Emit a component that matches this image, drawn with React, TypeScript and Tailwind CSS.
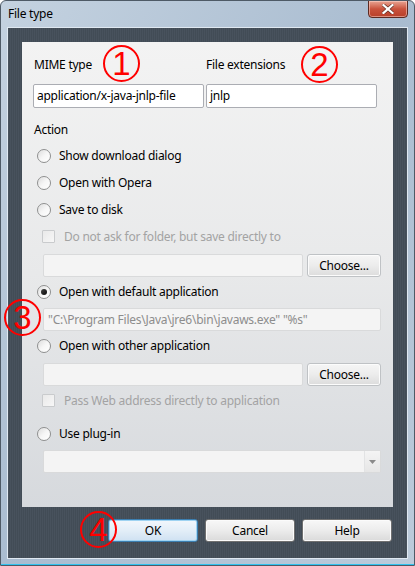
import React from "react";

const font = "font-['Noto_Sans','Open_Sans',sans-serif] tracking-[-0.25px]";

const Radio = ({ checked = false }: { checked?: boolean }) => (
  <span className="flex h-[14px] w-[14px] shrink-0 items-center justify-center rounded-full border border-[#8e8f8f] bg-gradient-to-br from-[#dcdcdc] via-[#f6f6f6] to-[#ffffff] shadow-[inset_0_0_1px_#fff]">
    {checked && (
      <span className="h-[6px] w-[6px] rounded-full bg-gradient-to-br from-[#444] to-[#0a0a0a]" />
    )}
  </span>
);

const RadioRow = ({
  label,
  checked = false,
  mt,
}: {
  label: string;
  checked?: boolean;
  mt: string;
}) => (
  <div className={`flex h-[27px] items-center gap-[8px] pl-[4px] ${mt}`}>
    <Radio checked={checked} />
    <span className="text-[12px] text-black">{label}</span>
  </div>
);

const CheckRow = ({ label, mt }: { label: string; mt: string }) => (
  <div className={`flex h-[27px] items-center gap-[9px] pl-[9px] ${mt}`}>
    <span className="h-[13px] w-[13px] shrink-0 rounded-[1px] border border-[#c9cbcd] bg-gradient-to-br from-[#e9e9e9] to-[#f7f7f7]" />
    <span className="text-[12px] text-[#a3a3a3]">{label}</span>
  </div>
);

const Choose = () => (
  <button className="flex h-[23px] w-[74px] items-center justify-center rounded-[3px] border border-[#bfc2c5] bg-gradient-to-b from-[#f6f6f6] via-[#ececec] to-[#dcdcdc] text-[12px] text-black shadow-[inset_0_0_0_1px_#fcfcfc]">
    Choose...
  </button>
);

const DialogButton = ({ label, primary = false }: { label: string; primary?: boolean }) => (
  <button
    className={`flex h-[23px] w-[90px] items-center justify-center rounded-[3px] border text-[12px] text-black ${
      primary
        ? "border-[#3c7fb1] bg-gradient-to-b from-[#f2f7fc] via-[#e3eef8] to-[#cfe1f2] shadow-[inset_0_0_0_1px_#9fd3f2]"
        : "border-[#707070] bg-gradient-to-b from-[#f8f8f8] via-[#ececec] to-[#dadada] shadow-[inset_0_0_0_1px_#fbfbfb]"
    }`}
  >
    {label}
  </button>
);

const Mark = ({ n, pos }: { n: string; pos: string }) => (
  <div
    className={`absolute flex h-[37px] w-[37px] items-center justify-center rounded-full border-[2px] border-[#ff0000] font-['Liberation_Sans',Arial,sans-serif] text-[33px] leading-none tracking-normal text-[#ff0000] ${pos}`}
  >
    {n}
  </div>
);

export default function App() {
  return (
    <div
      className={`relative flex h-[566px] w-[415px] flex-col overflow-hidden rounded-t-[6px] border border-[#4e5a66] bg-gradient-to-br from-[#c4d2e0] via-[#a9bcd0] to-[#bccbdb] ${font}`}
    >
      {/* title bar */}
      <div className="flex h-[26px] shrink-0 items-start justify-between">
        <span className="pl-[7px] pt-[5px] text-[12px] leading-[16px] text-black">File type</span>
        <div className="mr-[6px] mt-[-1px] flex h-[18px] w-[40px] items-center justify-center rounded-b-[4px] border border-[#5c2a22] bg-gradient-to-b from-[#e8a493] via-[#c9523c] to-[#b8402a] shadow-[inset_0_0_0_1px_rgba(255,220,210,0.5)]">
          <svg width="12" height="10" viewBox="0 0 12 10">
            <path d="M1.5 1 L10.5 9 M10.5 1 L1.5 9" stroke="#5a2a20" strokeWidth="3.4" strokeLinecap="square" />
            <path d="M1.5 1 L10.5 9 M10.5 1 L1.5 9" stroke="#ffffff" strokeWidth="2.2" strokeLinecap="square" />
          </svg>
        </div>
      </div>

      {/* dark client frame */}
      <div className="mx-[6px] mb-[6px] flex flex-1 flex-col border border-[#dfe8f1] bg-[repeating-linear-gradient(90deg,#48525d_0px,#48525d_1px,#424c56_1px,#424c56_2px)] px-[14px] pt-[14px]">
        <div className="flex h-[465px] flex-col bg-gradient-to-b from-[#f3f3f3] via-[#e8e9ea] to-[#d6d9dd] px-[11px] pt-[14px]">
          <div className="flex h-[18px] items-center text-[12px] text-black">
            <span className="w-[173px] pl-[1px]">MIME type</span>
            <span>File extensions</span>
          </div>
          <div className="mt-[10px] flex h-[24px] gap-[2px]">
            <div className="flex w-[171px] items-center rounded-[2px] border border-[#abadb3] bg-white px-[3px] text-[12px] text-black">
              application/x-java-jnlp-file
            </div>
            <div className="flex w-[171px] items-center rounded-[2px] border border-[#abadb3] bg-white px-[3px] text-[12px] text-black">
              jnlp
            </div>
          </div>

          <div className="mt-[13px] flex h-[18px] items-center pl-[1px] text-[12px] text-black">Action</div>

          <RadioRow label="Show download dialog" mt="mt-[3px]" />
          <RadioRow label="Open with Opera" mt="mt-0" />
          <RadioRow label="Save to disk" mt="mt-0" />
          <CheckRow label="Do not ask for folder, but save directly to" mt="mt-0" />
          <div className="mt-[4px] flex h-[23px] gap-[4px] pl-[10px]">
            <div className="w-[260px] rounded-[2px] border border-[#d9dadb] bg-[#f4f4f4]" />
            <Choose />
          </div>

          <RadioRow label="Open with default application" checked mt="mt-[1px]" />
          <div className="mt-[3px] flex h-[23px] pl-[10px]">
            <div className="flex w-[338px] items-center rounded-[2px] border border-[#d9dadb] bg-[#f4f4f4] px-[4px] text-[12px] text-[#8d8d8d]">
              "C:\Program Files\Java\jre6\bin\javaws.exe" "%s"
            </div>
          </div>

          <RadioRow label="Open with other application" mt="mt-[1px]" />
          <div className="mt-[4px] flex h-[23px] gap-[4px] pl-[10px]">
            <div className="w-[260px] rounded-[2px] border border-[#d9dadb] bg-[#f4f4f4]" />
            <Choose />
          </div>
          <CheckRow label="Pass Web address directly to application" mt="mt-[1px]" />

          <RadioRow label="Use plug-in" mt="mt-[6px]" />
          <div className="mt-[3px] flex h-[23px] pl-[10px]">
            <div className="flex w-[338px] rounded-[2px] border border-[#d9dadb] bg-[#f4f4f4]">
              <div className="flex-1" />
              <div className="flex w-[16px] items-center justify-center border-l border-[#e2e3e4] bg-gradient-to-b from-[#f4f4f4] to-[#e6e6e6]">
                <svg width="7" height="4" viewBox="0 0 7 4">
                  <path d="M0 0 H7 L3.5 4 Z" fill="#8a8a8a" />
                </svg>
              </div>
            </div>
          </div>
        </div>

        <div className="mt-[12px] flex h-[23px] justify-end gap-[7px] pr-[1px]">
          <DialogButton label="OK" primary />
          <DialogButton label="Cancel" />
          <DialogButton label="Help" />
        </div>
      </div>
      <div className="absolute bottom-0 left-0 right-0 h-[1px] bg-[#2fc3f0]" />

      <Mark n="1" pos="left-[102px] top-[44px]" />
      <Mark n="2" pos="left-[300px] top-[45px]" />
      <Mark n="3" pos="left-[3px] top-[298px]" />
      <Mark n="4" pos="left-[79px] top-[510px]" />
    </div>
  );
}
